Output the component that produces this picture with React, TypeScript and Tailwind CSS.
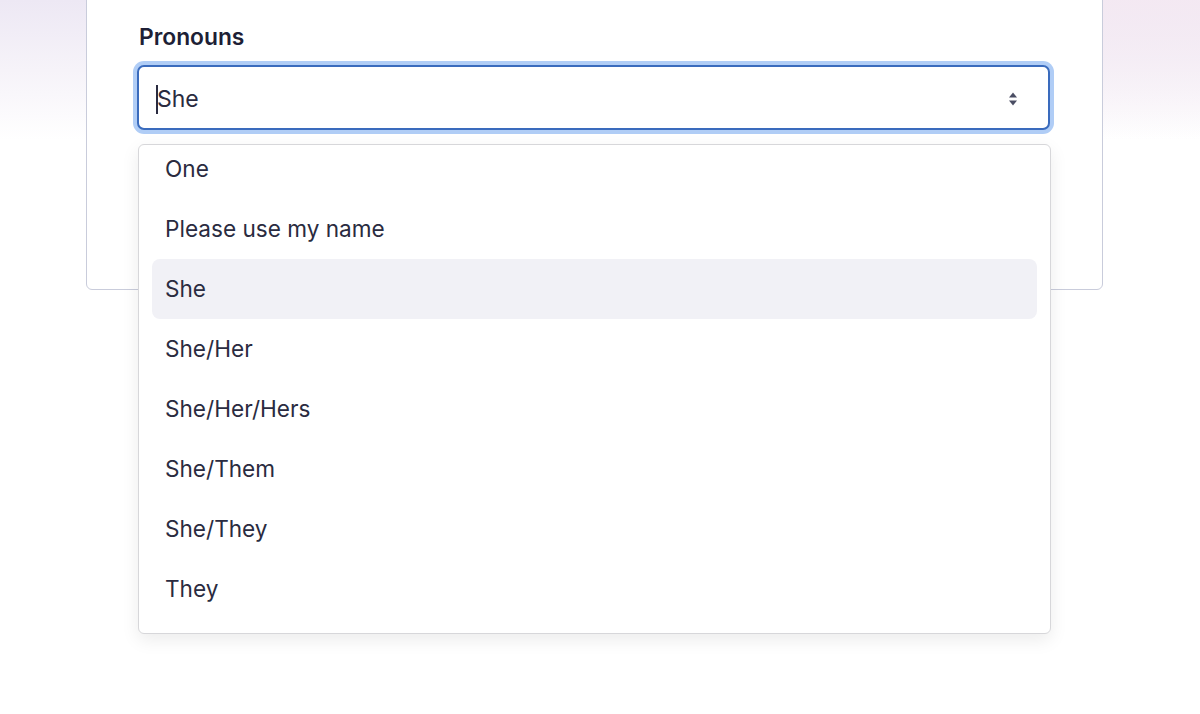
import React from "react"

const options = [
  "One",
  "Please use my name",
  "She",
  "She/Her",
  "She/Her/Hers",
  "She/Them",
  "She/They",
  "They",
]

function SortIcon() {
  return (
    <svg width="10" height="16" viewBox="0 0 10 16" fill="#4a4d63" aria-hidden>
      <path d="M5 1.5 L9 6.5 H1 Z" />
      <path d="M5 14.5 L9 9.5 H1 Z" />
    </svg>
  )
}

export default function App() {
  return (
    <div
      className="relative h-[714px] w-[1200px] overflow-hidden bg-white"
      style={{ fontFamily: "Inter, 'Noto Sans', sans-serif" }}
    >
      {/* soft gradient behind the card */}
      <div className="absolute inset-x-0 top-0 h-[140px] bg-gradient-to-b from-[#ede8f4] via-[#f6f3f9] to-white" />
      <div className="absolute right-0 top-0 h-[140px] w-[200px] bg-gradient-to-b from-[#f5e9f2] to-transparent opacity-80" />

      <div className="relative ml-[86px] -mt-[10px] h-[300px] w-[1017px] rounded-b-[6px] border border-[#c9ccdb] bg-white pl-[50px] pr-[52px] pt-[31px]">
        <label className="block pl-[2px] text-[22.8px] font-semibold leading-[30px] text-[#1e1f36]">Pronouns</label>

        <div className="mt-[13px] flex h-[65px] items-center rounded-[7px] border-2 border-[#3a6bbd] bg-white pl-[18px] pr-[30px] pt-[3px] shadow-[0_0_0_4px_#b0cdf6]">
          <span className="relative text-[23px] leading-none text-[#2a2b40]">
            <span className="absolute -left-[1px] top-[-3px] h-[29px] w-[1.5px] bg-[#2a2b40]" />
            She
          </span>
          <span className="ml-auto flex items-center">
            <SortIcon />
          </span>
        </div>
      </div>

      {/* dropdown list */}
      <div className="absolute left-[138px] top-[144px] h-[490px] w-[913px] overflow-hidden rounded-[6px] border border-[#d7d7da] bg-white shadow-[0_6px_18px_rgba(0,0,0,0.08)]">
        <ul className="-mt-[6px] px-[13px]">
          {options.map((o) => (
            <li
              key={o}
              className={
                "flex h-[60px] items-center rounded-[8px] px-[13px] text-[22.6px] text-[#2a2b40] " +
                (o === "She" ? "bg-[#f1f1f6]" : "")
              }
            >
              {o}
            </li>
          ))}
        </ul>
      </div>
    </div>
  )
}
